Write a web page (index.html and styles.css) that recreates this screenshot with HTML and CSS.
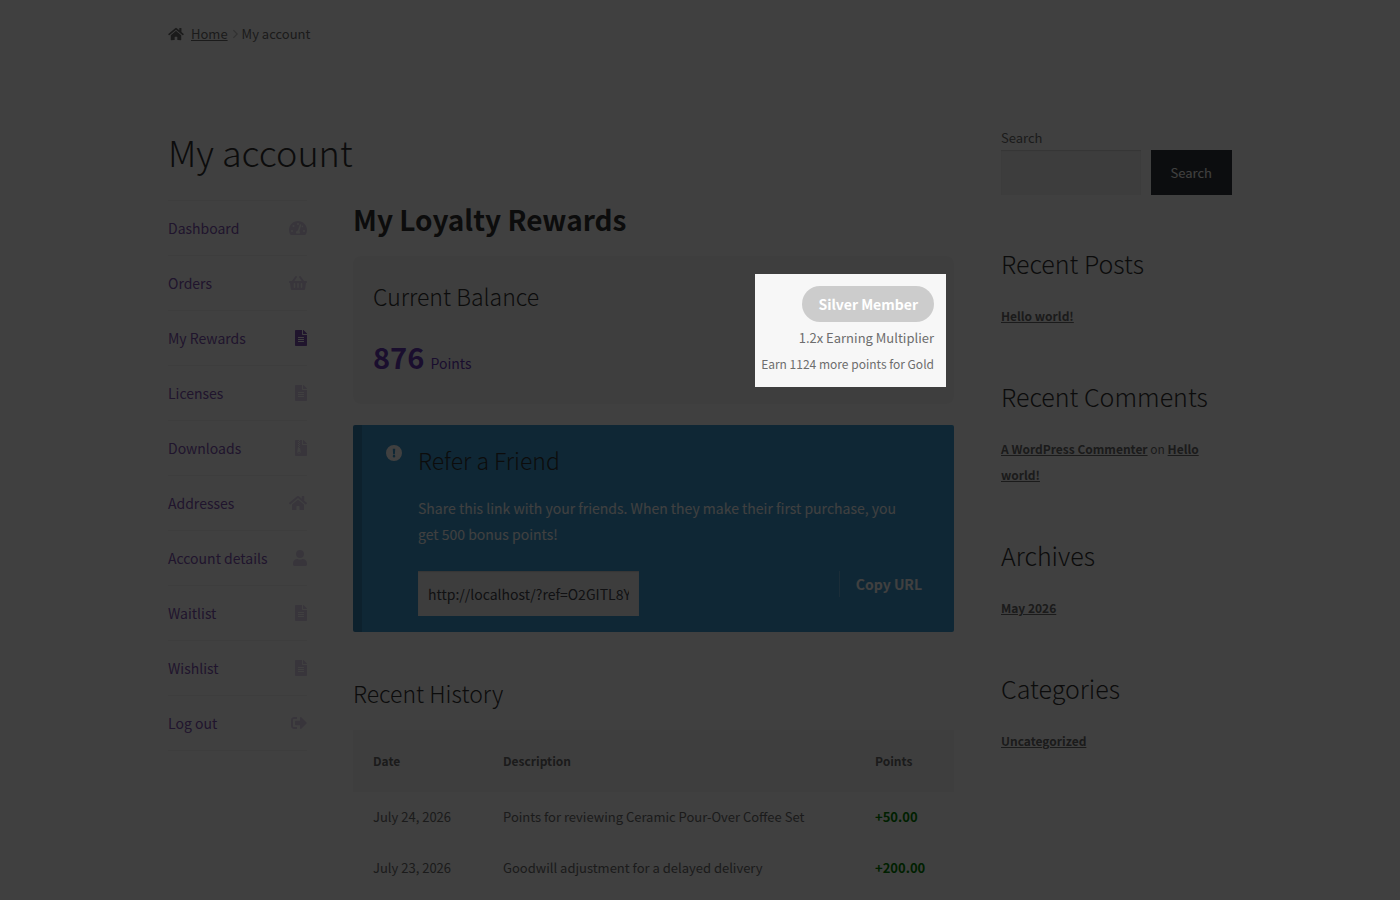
FILE: index.html
```html
<!DOCTYPE html>
<html lang="en">
<head>
	<meta charset="UTF-8">
	<meta name="viewport" content="width=device-width, initial-scale=1">
	<title>My account</title>
	<link rel="stylesheet" href="styles.css">
</head>
<body>
	<!-- shared icons -->
	<svg class="sprite" aria-hidden="true">
		<symbol id="i-home" viewBox="0 0 576 512"><path d="M280.37 148.26L96 300.11V464a16 16 0 0 0 16 16l112.06-.29a16 16 0 0 0 15.92-16V368a16 16 0 0 1 16-16h64a16 16 0 0 1 16 16v95.64a16 16 0 0 0 16 16.05L464 480a16 16 0 0 0 16-16V300L295.67 148.26a12.19 12.19 0 0 0-15.3 0zM571.6 251.47L488 182.56V44.05a12 12 0 0 0-12-12h-56a12 12 0 0 0-12 12v72.61L318.47 43a48 48 0 0 0-61 0L4.34 251.47a12 12 0 0 0-1.6 16.9l25.5 31A12 12 0 0 0 45.15 301l235.22-193.74a12.19 12.19 0 0 1 15.3 0L530.9 301a12 12 0 0 0 16.9-1.6l25.5-31a12 12 0 0 0-1.7-16.93z"/></symbol>
		<symbol id="i-file" viewBox="0 0 384 512"><path d="M224 136V0H24C10.7 0 0 10.7 0 24v464c0 13.3 10.7 24 24 24h336c13.3 0 24-10.7 24-24V160H248c-13.2 0-24-10.8-24-24zm64 236c0 6.6-5.4 12-12 12H108c-6.6 0-12-5.4-12-12v-8c0-6.6 5.4-12 12-12h168c6.6 0 12 5.4 12 12v8zm0-64c0 6.6-5.4 12-12 12H108c-6.6 0-12-5.4-12-12v-8c0-6.6 5.4-12 12-12h168c6.6 0 12 5.4 12 12v8zm0-72v8c0 6.6-5.4 12-12 12H108c-6.6 0-12-5.4-12-12v-8c0-6.6 5.4-12 12-12h168c6.6 0 12 5.4 12 12zm96-114.1v6.1H256V0h6.1c6.4 0 12.5 2.5 17 7l97.9 98c4.5 4.5 7 10.6 7 16.9z"/></symbol>
		<symbol id="i-zip" viewBox="0 0 384 512"><path fill-rule="evenodd" d="M224 136V0H160v32h-32V0H24C11 0 0 11 0 24v464c0 13 11 24 24 24h336c13 0 24-11 24-24V160H248c-13 0-24-11-24-24zM96 32h32v32H96zm32 32h32v32h-32zM96 96h32v32H96zm32 32h32v32h-32zM96 160h32v32H96zm32 32h32v32h-32zM97 224h31v32h22c6 0 11 4 12 9l19 99c8 38-20 68-53 68s-61-31-53-68zm31 148c-18 0-32 11-32 24s14 24 32 24 32-11 32-24-14-24-32-24zM384 122v6H256V0h6c6 0 13 3 17 7l98 98c4 4 7 10 7 17z"/></symbol>
		<symbol id="i-gauge" viewBox="0 0 576 512"><path fill-rule="evenodd" d="M288 32C129 32 0 161 0 320c0 53 14 102 39 145 6 9 16 15 27 15h444c11 0 21-6 27-15 25-43 39-92 39-145C576 161 447 32 288 32zm0 64a32 32 0 1 1 0 64 32 32 0 0 1 0-64zM96 384a32 32 0 1 1 0-64 32 32 0 0 1 0 64zm48-160a32 32 0 1 1 0-64 32 32 0 0 1 0 64zm247-56l-61 184c13 12 22 29 22 48 0 12-3 23-9 32H233c-6-9-9-20-9-32 0-34 27-62 60-64l61-183c4-13 18-20 31-16 12 4 19 18 15 31zm17 36c5-16 19-28 36-28a32 32 0 1 1-49 43zm72 180a32 32 0 1 1 0-64 32 32 0 0 1 0 64z"/></symbol>
		<symbol id="i-basket" viewBox="0 0 576 512"><path d="M576 216v16c0 13-11 24-24 24h-8l-26 181c-3 24-23 43-47 43H105c-24 0-44-19-47-43L32 256h-8c-13 0-24-11-24-24v-16c0-13 11-24 24-24h67L199 44c10-15 30-18 45-8 14 11 17 31 6 45l-80 111h236L326 81c-11-14-8-34 6-45 15-10 35-7 45 8l108 148h67c13 0 24 11 24 24zM312 392V280c0-13-11-24-24-24s-24 11-24 24v112c0 13 11 24 24 24s24-11 24-24zm112 0V280c0-13-11-24-24-24s-24 11-24 24v112c0 13 11 24 24 24s24-11 24-24zm-224 0V280c0-13-11-24-24-24s-24 11-24 24v112c0 13 11 24 24 24s24-11 24-24z"/></symbol>
		<symbol id="i-user" viewBox="0 0 448 512"><path d="M224 256a128 128 0 1 0 0-256 128 128 0 0 0 0 256zm90 32h-17a174 174 0 0 1-146 0h-17C60 288 0 348 0 422v42c0 27 21 48 48 48h352c27 0 48-21 48-48v-42c0-74-60-134-134-134z"/></symbol>
		<symbol id="i-logout" viewBox="0 0 512 512"><path d="M497 273L329 441c-15 15-41 4-41-17v-96H152c-13 0-24-11-24-24v-96c0-13 11-24 24-24h136V88c0-21 26-32 41-17l168 168c9 9 9 25 0 34zM192 436v-40c0-7-5-12-12-12H96c-18 0-32-14-32-32V160c0-18 14-32 32-32h84c7 0 12-5 12-12V76c0-7-5-12-12-12H96c-53 0-96 43-96 96v192c0 53 43 96 96 96h84c7 0 12-5 12-12z"/></symbol>
		<symbol id="i-info" viewBox="0 0 512 512"><path fill-rule="evenodd" d="M256 0a256 256 0 1 0 0 512 256 256 0 0 0 0-512zm-40 118h80l-12 174h-56zm40 196a42 42 0 1 1 0 84 42 42 0 0 1 0-84z"/></symbol>
		<symbol id="i-angle" viewBox="0 0 256 512"><path d="M40 110l40-40 178 186L80 442l-40-40 140-146z"/></symbol>
	</svg>

	<div class="container">
		<nav class="breadcrumb" aria-label="Breadcrumb">
			<svg class="crumb_home" aria-hidden="true"><use href="#i-home"/></svg>
			<a href="#">Home</a>
			<svg class="crumb_sep" aria-hidden="true"><use href="#i-angle"/></svg>
			<span>My account</span>
		</nav>

		<div class="columns">
			<main class="primary">
				<h1 class="page_title">My account</h1>
				<div class="account">
					<nav class="account_nav" aria-label="Account pages">
						<a href="#">Dashboard<svg class="icon wide"><use href="#i-gauge"/></svg></a>
						<a href="#">Orders<svg class="icon wide"><use href="#i-basket"/></svg></a>
						<a href="#" class="active" aria-current="page">My Rewards<svg class="icon thin"><use href="#i-file"/></svg></a>
						<a href="#">Licenses<svg class="icon thin"><use href="#i-file"/></svg></a>
						<a href="#">Downloads<svg class="icon thin"><use href="#i-zip"/></svg></a>
						<a href="#">Addresses<svg class="icon wide"><use href="#i-home"/></svg></a>
						<a href="#">Account details<svg class="icon mid"><use href="#i-user"/></svg></a>
						<a href="#">Waitlist<svg class="icon thin"><use href="#i-file"/></svg></a>
						<a href="#">Wishlist<svg class="icon thin"><use href="#i-file"/></svg></a>
						<a href="#">Log out<svg class="icon"><use href="#i-logout"/></svg></a>
					</nav>

					<div class="content">
						<h2 class="rewards_title">My Loyalty Rewards</h2>

						<section class="balance">
							<div>
								<h3 class="sub_title">Current Balance</h3>
								<p class="points"><strong>876</strong> Points</p>
							</div>
							<div class="tier">
								<span class="badge">Silver Member</span>
								<span class="tier_rate">1.2x Earning Multiplier</span>
								<span class="tier_next">Earn 1124 more points for Gold</span>
							</div>
						</section>

						<section class="notice">
							<svg class="notice_icon" aria-hidden="true"><use href="#i-info"/></svg>
							<div class="notice_body">
								<h3 class="sub_title">Refer a Friend</h3>
								<p>Share this link with your friends. When they make their first purchase, you get 500 bonus points!</p>
								<div class="share">
									<input type="text" class="share_url" value="http://localhost/?ref=O2GITL8Y" aria-label="Referral link" readonly>
									<button type="button" class="copy">Copy URL</button>
								</div>
							</div>
						</section>

						<h3 class="sub_title">Recent History</h3>
						<table class="history">
							<thead>
								<tr><th class="col_date">Date</th><th>Description</th><th class="col_points">Points</th></tr>
							</thead>
							<tbody>
								<tr><td>July 24, 2026</td><td>Points for reviewing Ceramic Pour-Over Coffee Set</td><td class="plus">+50.00</td></tr>
								<tr><td>July 23, 2026</td><td>Goodwill adjustment for a delayed delivery</td><td class="plus">+200.00</td></tr>
							</tbody>
						</table>
					</div>
				</div>
			</main>

			<aside class="sidebar">
				<form class="search">
					<label for="search">Search</label>
					<div class="search_row">
						<input type="search" id="search">
						<button type="submit">Search</button>
					</div>
				</form>
				<section class="widget">
					<h2>Recent Posts</h2>
					<p><a href="#">Hello world!</a></p>
				</section>
				<section class="widget">
					<h2>Recent Comments</h2>
					<p><a href="#">A WordPress Commenter</a> on <a href="#">Hello world!</a></p>
				</section>
				<section class="widget">
					<h2>Archives</h2>
					<p><a href="#">May 2026</a></p>
				</section>
				<section class="widget">
					<h2>Categories</h2>
					<p><a href="#">Uncategorized</a></p>
				</section>
			</aside>
		</div>
	</div>
</body>
</html>
```
FILE: styles.css
```css
*{box-sizing:border-box;}
body{margin:0;background:#fff;color:#6d6d6d;font-family:"Source Sans Pro","Noto Sans CJK SC",sans-serif;font-size:14px;line-height:26px;overflow-x:hidden;}
h1,h2,h3,p{margin:0;}
h1,h2,h3{color:#333;font-weight:300;}
a{color:#6d6d6d;}
input,button{font:inherit;border:0;border-radius:0;}
svg{fill:currentColor;}
.sprite{position:absolute;width:0;height:0;}
.container{max-width:1144px;margin:0 auto;padding:0 40px 40px;}

.breadcrumb{display:flex;align-items:center;padding-top:21px;font-size:13px;}
.crumb_home{width:16px;height:14px;margin-right:7px;}
.crumb_sep{width:6px;height:12px;margin:0 4px;opacity:.4;}

.columns{display:grid;grid-template-columns:minmax(0,1fr) 231px;gap:47px;padding-top:78px;}
.page_title{font-size:36px;line-height:52px;margin-bottom:23px;}
.account{display:grid;grid-template-columns:139px minmax(0,1fr);gap:46px;align-items:start;}

.account_nav{border-top:1px solid rgba(0,0,0,.05);}
.account_nav a{display:flex;justify-content:space-between;align-items:center;height:55px;border-bottom:1px solid rgba(0,0,0,.05);color:#7f54b3;text-decoration:none;}
.icon{width:16px;height:16px;opacity:.25;}
.icon.wide{width:18px;}
.icon.mid{width:14px;}
.icon.thin{width:12px;}
.active .icon{opacity:1;}

.rewards_title{font-size:28px;line-height:38px;font-weight:600;margin-bottom:18px;}
.sub_title{font-size:23px;line-height:32px;}
.balance{display:flex;justify-content:space-between;padding:20px;margin-bottom:21px;background:#f7f7f7;border-radius:8px;}
.balance .sub_title{line-height:40px;}
.points{color:#673ab7;margin-top:12px;}
.points strong{font-size:29px;line-height:56px;margin-right:3px;}

/* everything outside the tier box is dimmed */
.tier{position:relative;z-index:10;display:flex;flex-direction:column;align-items:flex-end;margin-top:10px;height:89px;}
.tier::before{content:"";position:absolute;inset:-12px -12px -12px -6px;box-shadow:0 0 0 2000px rgba(0,0,0,.75);pointer-events:none;}
.badge{padding:5px 16px;margin-bottom:3px;border-radius:18px;background:#ccc;color:#fff;font-weight:700;}
.tier_rate{font-size:13px;}
.tier_next{font-size:12px;}

.notice{display:flex;align-items:flex-start;padding:19px 32px 16px 24px;margin-bottom:45px;border-left:9px solid #3585b3;border-radius:2px;background:#3d9cd2;color:#fff;}
.notice_icon{flex:none;width:16px;height:16px;margin:1px 16px 0 0;}
.notice_body{flex:1;min-width:0;}
.notice .sub_title{margin-bottom:19px;}
.notice p{margin-bottom:24px;padding-right:12px;}
.share{display:flex;justify-content:space-between;align-items:flex-start;}
.share_url{width:221px;height:45px;padding:0 10px;background:#f2f2f2;color:#43454b;box-shadow:inset 0 1px 1px rgba(0,0,0,.125);}
.copy{padding:0 0 0 16px;border-left:1px solid rgba(255,255,255,.25);background:none;color:#fff;font-weight:600;cursor:pointer;}

.history{width:100%;margin-top:21px;border-collapse:collapse;table-layout:fixed;font-size:13px;text-align:left;}
.history th{padding:18px 20px;background:#f8f8f8;font-size:12px;font-weight:600;}
.history td{padding:12px 20px 13px;background:#fdfdfd;}
.col_date{width:130px;}
.col_points{width:99px;}
.history .plus{color:green;font-weight:700;}

.search{font-size:13px;margin-bottom:51px;}
.search label{display:block;line-height:25px;}
.search_row{display:flex;gap:10px;}
.search_row input{flex:1;min-width:0;height:45px;background:#f2f2f2;box-shadow:inset 0 1px 1px rgba(0,0,0,.125);}
.search_row button{padding:0 20px;background:#32373c;color:#fff;cursor:pointer;}
.widget{margin-bottom:50px;font-size:12px;}
.widget h2{font-size:25px;line-height:34px;margin-bottom:23px;}
.widget a{font-weight:600;}
```
